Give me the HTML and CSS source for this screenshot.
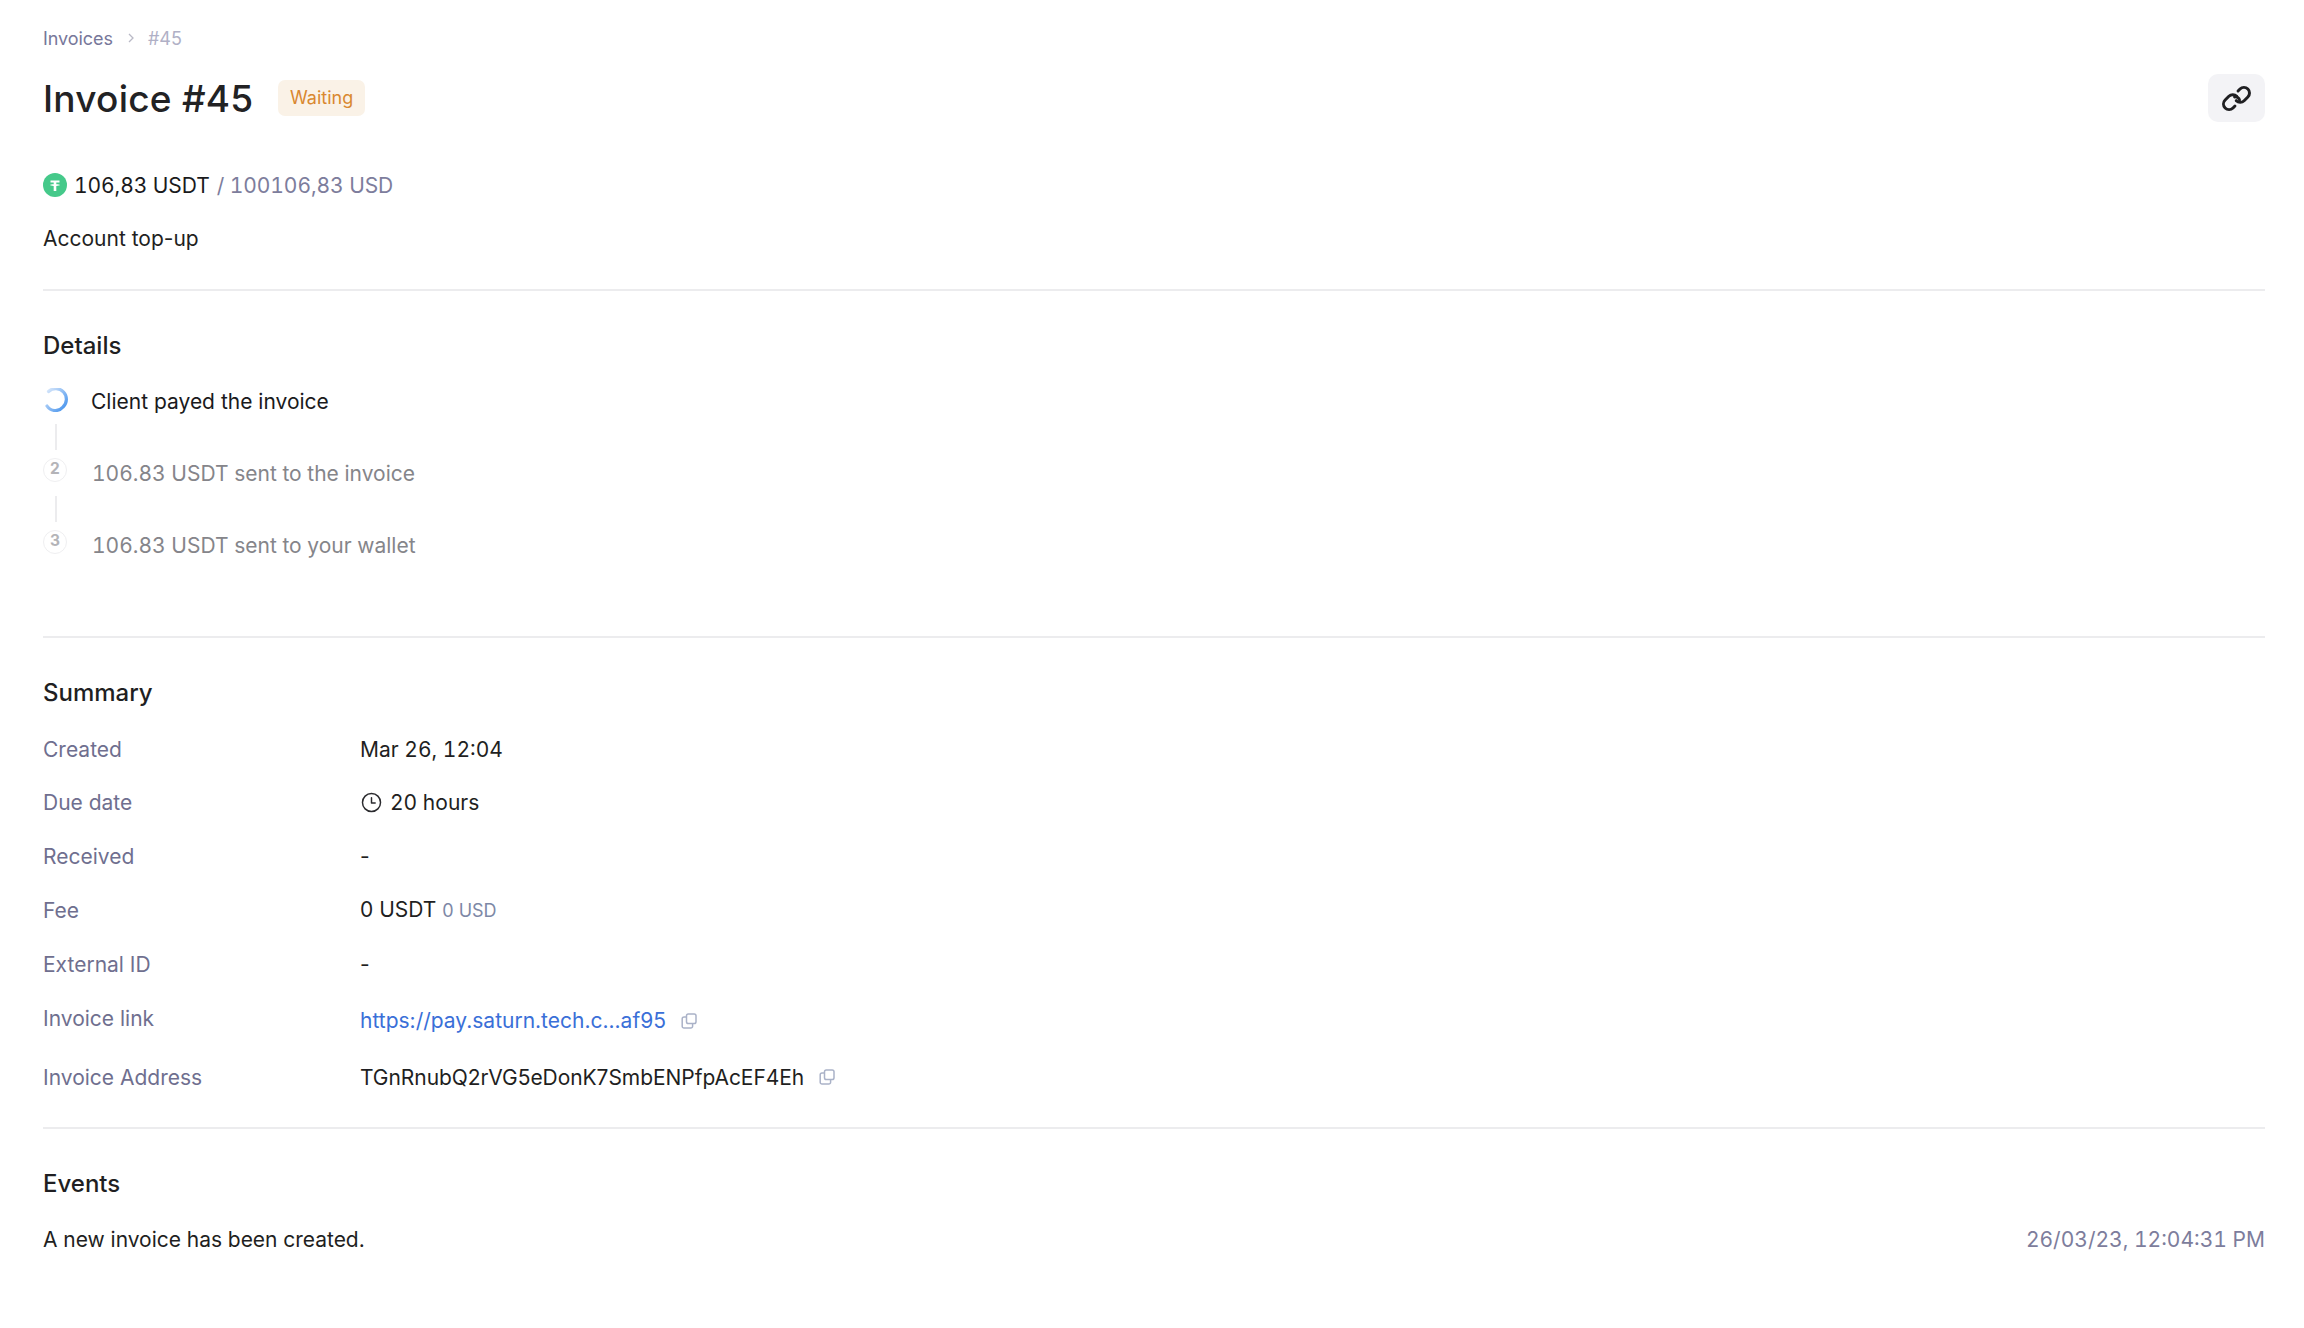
FILE: index.html
```html
<!DOCTYPE html>
<html lang="en">
<head>
<meta charset="utf-8">
<title>Invoice #45</title>
<link rel="stylesheet" href="styles.css">
</head>
<body>
<main class="page">
  <nav class="crumbs">
    <a class="crumb-link">Invoices</a>
    <svg class="crumb-sep" viewBox="0 0 10 12" width="10" height="12"><path d="M3 2l4 4-4 4" fill="none" stroke="#b9b9c6" stroke-width="1.3"/></svg>
    <span class="crumb-current">#45</span>
  </nav>
  <header class="head">
    <div class="head-left">
      <h1 class="title">Invoice #45</h1>
      <span class="badge">Waiting</span>
    </div>
    <button class="link-btn" aria-label="Copy link">
      <svg viewBox="0 0 24 24" width="31" height="31" fill="none" stroke="#1f1f22" stroke-width="2.3" stroke-linecap="round" stroke-linejoin="round"><path d="M13.2 6.200l1.500-1.500a4.300 4.300 0 0 1 6.100 6.100l-2.900 2.900a4.300 4.300 0 0 1-6.100 0"/><path d="M10.800 17.800l-1.500 1.500a4.300 4.300 0 0 1-6.100-6.100l2.900-2.900a4.300 4.300 0 0 1 6.100 0"/><path d="M10.500 10.800a3 3 0 0 1 3.800 2.400"/></svg>
    </button>
  </header>
  <div class="amount tnum">
    <svg class="coin" viewBox="0 0 24 24" width="24" height="24"><circle cx="12" cy="12" r="12" fill="#45c98a"/><path d="M7.500 7.500h9v2h-3.200v1.700c1.900.1 3.700.4 3.700.9s-1.800.8-3.700.9V18h-2.600v-5c-1.900-.1-3.700-.4-3.700-.9s1.800-.8 3.700-.9V9.500H7.500z" fill="#fff"/></svg>
    <span class="amount-main">106,83 USDT</span>
    <span class="amount-sub">/ 100106,83 USD</span>
  </div>
  <p class="desc">Account top-up</p>
  <hr class="rule rule-first">

  <section>
    <h2 class="section-title">Details</h2>
    <ol class="steps">
      <li class="step">
        <svg class="spinner" viewBox="0 0 24 24" width="24" height="24" fill="none"><defs><linearGradient id="spin" x1="0" y1="0" x2="1" y2="1"><stop offset="0" stop-color="#dbe9fb"/><stop offset="1" stop-color="#3f8fec"/></linearGradient></defs><path d="M4.500 3.500A10 10 0 0 1 19 19 10 10 0 0 1 3 18" stroke="url(#spin)" stroke-width="3.200" stroke-linecap="round"/></svg>
        <span class="step-text step-active">Client payed the invoice</span>
      </li>
      <li class="connector"></li>
      <li class="step">
        <span class="step-num">2</span>
        <span class="step-text tnum">106.83 USDT sent to the invoice</span>
      </li>
      <li class="connector"></li>
      <li class="step">
        <span class="step-num">3</span>
        <span class="step-text tnum">106.83 USDT sent to your wallet</span>
      </li>
    </ol>
  </section>
  <hr class="rule rule-steps">

  <section>
    <h2 class="section-title">Summary</h2>
    <dl class="summary">
      <div class="row"><dt>Created</dt><dd class="tnum">Mar 26, 12:04</dd></div>
      <div class="row"><dt>Due date</dt><dd class="inline">
        <svg class="clock" viewBox="0 0 20 20" width="21" height="21" fill="none" stroke="#2a2a2e" stroke-width="1.400" stroke-linecap="round" stroke-linejoin="round"><circle cx="10" cy="10" r="8.600"/><path d="M10 5.500V10.500h3.500"/></svg>
        <span class="tnum">20 hours</span></dd></div>
      <div class="row"><dt>Received</dt><dd>-</dd></div>
      <div class="row"><dt>Fee</dt><dd>0 USDT <small class="fee-usd">0 USD</small></dd></div>
      <div class="row"><dt>External ID</dt><dd>-</dd></div>
      <div class="row row-link"><dt>Invoice link</dt><dd class="inline gap-copy">
        <a class="link">https://pay.saturn.tech.c...af95</a>
        <svg class="copy" viewBox="0 0 16 16" width="16" height="16" fill="none" stroke="#aab2c8" stroke-width="1.500" stroke-linejoin="round"><rect x="5.500" y="1" width="9.500" height="9.500" rx="1.800"/><path d="M5.500 4H3A1.800 1.800 0 0 0 1.200 5.800v7.400A1.800 1.800 0 0 0 3 15h6.800a1.800 1.800 0 0 0 1.800-1.800v-2.700"/></svg></dd></div>
      <div class="row row-addr"><dt>Invoice Address</dt><dd class="inline gap-copy">
        <span class="address">TGnRnubQ2rVG5eDonK7SmbENPfpAcEF4Eh</span>
        <svg class="copy" viewBox="0 0 16 16" width="16" height="16" fill="none" stroke="#aab2c8" stroke-width="1.500" stroke-linejoin="round"><rect x="5.500" y="1" width="9.500" height="9.500" rx="1.800"/><path d="M5.500 4H3A1.800 1.800 0 0 0 1.200 5.800v7.400A1.800 1.800 0 0 0 3 15h6.800a1.800 1.800 0 0 0 1.800-1.800v-2.700"/></svg></dd></div>
    </dl>
  </section>
  <hr class="rule rule-summary">

  <section>
    <h2 class="section-title">Events</h2>
    <div class="event">
      <span class="event-text">A new invoice has been created.</span>
      <time class="event-time tnum">26/03/23, 12:04:31 PM</time>
    </div>
  </section>
</main>
</body>
</html>
```
FILE: styles.css
```css
* { box-sizing: border-box; }
html, body { margin: 0; padding: 0; background: #fff; }
body {
  font-family: Inter, "Liberation Sans", sans-serif;
  font-size: 21px;
  line-height: 29px;
  color: #1f1f22;
}
.tnum { font-variant-numeric: tabular-nums; }
.page { padding: 24px 39px 0 43px; }

.crumbs { display: flex; align-items: center; height: 28px; font-size: 18px; gap: 12.500px; letter-spacing: -0.05px; }
.crumb-link { color: #77779a; }
.crumb-current { color: #b0b0c6; }

.head { display: flex; justify-content: space-between; align-items: center; height: 48px; margin-top: 22px; }
.head-left { display: flex; align-items: center; gap: 25px; }
.title { margin: 2px 0 0; font-size: 37px; line-height: 44px; font-weight: 500; color: #222224; letter-spacing: 0.25px; }
.badge { display: block; padding: 0 11.500px; height: 36px; line-height: 36px; border-radius: 7px; background: #faf2e7; color: #d9882f; font-size: 18px; }
.link-btn { display: flex; align-items: center; justify-content: center; width: 57px; height: 48px; border: 0; padding: 0; border-radius: 10px; background: #f3f3f6; }

.amount { display: flex; align-items: center; margin-top: 48px; height: 30px; gap: 7px; letter-spacing: -0.08px; }
.coin { flex: none; }
.amount-main { color: #1a1a1c; margin-left: 0; }
.amount-sub { color: #7d7d9c; }
.desc { margin: 24px 0 0; }

.rule { border: 0; height: 2px; background: #ececee; margin: 0; }
.rule-first { margin-top: 36px; }
.rule-steps { margin-top: 76px; }
.rule-summary { margin-top: 35px; }

.section-title { margin: 40px 0 0; font-size: 24px; line-height: 30px; font-weight: 500; color: #1f1f22; }

.steps { list-style: none; margin: 25px 0 0; padding: 0; }
.step { display: flex; align-items: center; gap: 25px; height: 30px; }
.spinner { flex: none; margin: -3px 0 0 1px; }
.step-num { flex: none; width: 24px; height: 24px; margin-top: -6px; border: 1.500px solid #efeff1; border-radius: 50%; color: #b4b4b8; font-size: 15.500px; font-weight: 700; line-height: 20px; text-align: center; }
.step-text { color: #85858a; }
.step-active { color: #1a1a1c; margin-left: -2px; }
.connector { width: 2px; height: 26px; margin: 8px 0 8px 12px; background: #ececee; }

.summary { display: flex; flex-direction: column; margin: 26px 0 0; }
.row { display: flex; align-items: center; flex: none; height: 30px; margin-bottom: 23.800px; }
.row dt { width: 317px; color: #6f6f8f; }
.row dd { margin: 0; color: #1f1f22; }
.inline { display: flex; align-items: center; gap: 8px; }
.clock { flex: none; margin-left: 1px; }
.gap-copy { gap: 15px; }
.fee-usd { font-size: 18px; color: #7d88a6; margin-left: 0; }
.row-link { margin: 1.500px 0 28px; }
.row-link dt { margin-top: -2px; }
.row-link dd { margin-top: 3px; }
.row-addr { margin-bottom: 0; }
.address { letter-spacing: -0.06px; }
.link { color: #3a6fd8; }

.event { display: flex; justify-content: space-between; margin-top: 26px; }
.event-text { letter-spacing: -0.03px; }
.event-time { color: #7d7d9c; }
```
